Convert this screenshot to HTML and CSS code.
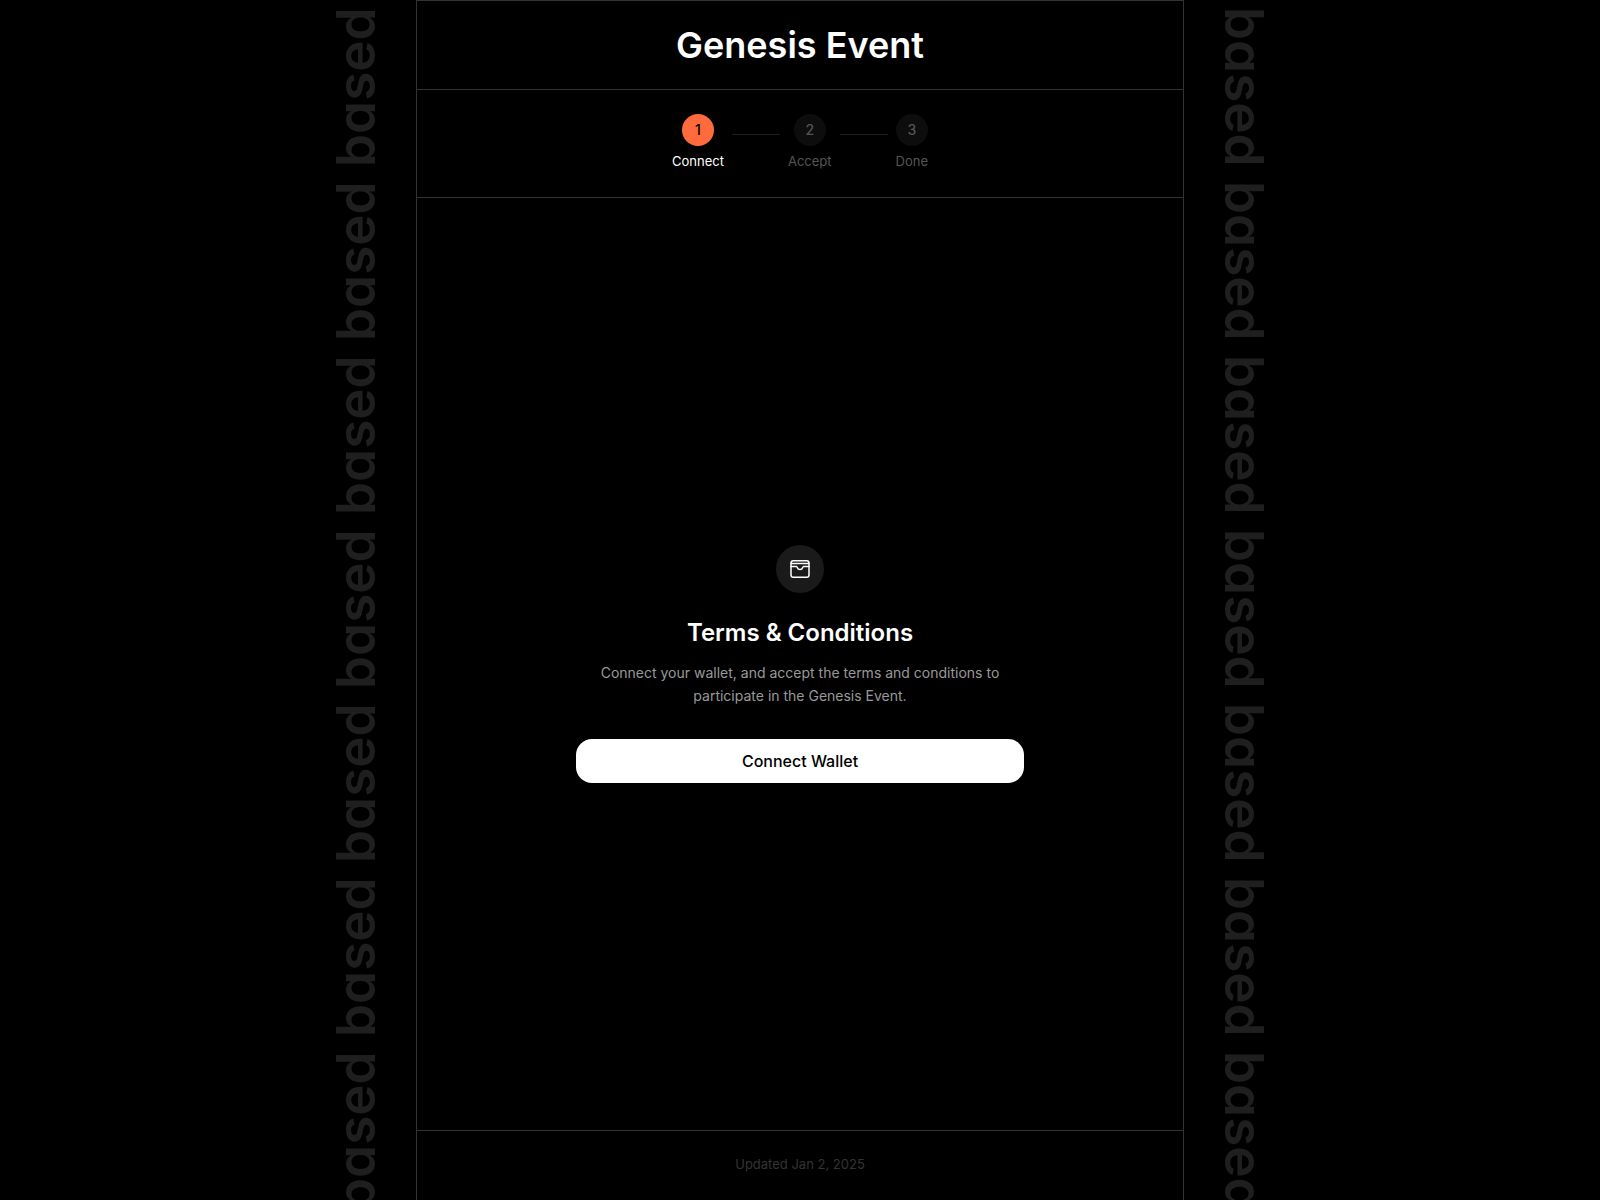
FILE: index.html
```html
<!DOCTYPE html>
<html lang="en">
<head>
<meta charset="utf-8">
<meta name="viewport" content="width=device-width, initial-scale=1">
<title>Genesis Event</title>
<link rel="stylesheet" href="styles.css">
</head>
<body>
<div class="page">
  <div class="rail rail-left" aria-hidden="true">
    <span>based</span><span>based</span><span>based</span><span>based</span><span>based</span><span>based</span><span>based</span>
  </div>
  <div class="frame">
    <header class="header"><h1>Genesis Event</h1></header>
    <ol class="steps">
      <li class="step step-active"><span class="dot">1</span><span class="label">Connect</span></li>
      <li class="connector" aria-hidden="true"></li>
      <li class="step"><span class="dot">2</span><span class="label">Accept</span></li>
      <li class="connector" aria-hidden="true"></li>
      <li class="step"><span class="dot">3</span><span class="label">Done</span></li>
    </ol>
    <main class="main">
      <section class="panel">
        <div class="badge">
          <svg width="24" height="24" viewBox="0 0 24 24" fill="none" stroke="currentColor" stroke-width="1.5" stroke-linecap="round" stroke-linejoin="round" aria-hidden="true">
            <rect x="3" y="3.75" width="18" height="16.5" rx="2.25"/>
            <path d="M3 6.6h18M3 9.5h5.25c.6 0 .9.5 1.1 1.1a2.75 2.75 0 0 0 5.3 0c.2-.6.5-1.1 1.1-1.1H21"/>
          </svg>
        </div>
        <h2>Terms &amp; Conditions</h2>
        <p>Connect your wallet, and accept the terms and conditions to participate in the Genesis Event.</p>
        <button type="button" class="connect">Connect Wallet</button>
      </section>
    </main>
    <footer class="footer">Updated Jan 2, 2025</footer>
  </div>
  <div class="rail" aria-hidden="true">
    <span>based</span><span>based</span><span>based</span><span>based</span><span>based</span><span>based</span><span>based</span>
  </div>
</div>
</body>
</html>
```
FILE: styles.css
```css
* {
  box-sizing: border-box;
}

body {
  margin: 0;
  background: #000;
  color: #fff;
  font-family: Inter, "Liberation Sans", sans-serif;
}

h1, h2, p, ol {
  margin: 0;
  padding: 0;
}

.page {
  display: flex;
  justify-content: center;
  gap: 40px;
  height: 100vh;
  overflow: hidden;
}

/* Repeating wordmark on both sides */
.rail {
  display: flex;
  flex-direction: column;
  gap: 20px;
  flex: none;
  width: 40px;
  padding-top: 10px;
  color: #1f1f1f;
  font-size: 53px;
  font-weight: 600;
  line-height: 40px;
  font-feature-settings: "cv11";
}

.rail span {
  flex: none;
  height: 154px;
  writing-mode: vertical-rl;
  display: flex;
  justify-content: center;
}

.rail-left span {
  transform: rotate(180deg);
}

.frame {
  display: flex;
  flex-direction: column;
  flex: 0 1 768px;
  border: 1px solid #333;
  border-bottom: 0;
}

.header {
  padding: 20px 24px;
  border-bottom: 1px solid #333;
  text-align: center;
}

h1 {
  font-size: 36px;
  font-weight: 600;
  line-height: 48px;
}

.steps {
  display: flex;
  justify-content: center;
  gap: 8px;
  padding: 24px 24px 28px;
  border-bottom: 1px solid #333;
  list-style: none;
}

.step {
  display: flex;
  flex-direction: column;
  align-items: center;
  gap: 7px;
  color: #555;
}

.dot {
  width: 32px;
  height: 32px;
  border-radius: 50%;
  background: #0d0d0d;
  font-size: 14px;
  font-weight: 500;
  line-height: 31px;
  text-align: center;
}

.label {
  font-size: 13px;
  line-height: 16px;
}

.step-active {
  color: #fff;
}

.step-active .dot {
  background: #ff6b3d;
  color: #000;
}

.connector {
  width: 48px;
  height: 1px;
  margin-top: 20px;
  background: #1f1f1f;
}

.main {
  display: grid;
  flex: 1;
  place-items: center;
}

.panel {
  display: flex;
  flex-direction: column;
  align-items: center;
  width: 100%;
  max-width: 448px;
  text-align: center;
}

.badge {
  display: grid;
  place-items: center;
  width: 48px;
  height: 48px;
  margin-bottom: 24px;
  border-radius: 50%;
  background: #1a1a1a;
}

h2 {
  margin-bottom: 12px;
  font-size: 24px;
  font-weight: 600;
  line-height: 32px;
}

.panel p {
  margin-bottom: 32px;
  padding: 0 16px;
  color: #999;
  font-size: 14px;
  line-height: 23px;
}

.connect {
  width: 100%;
  height: 44px;
  border: 0;
  border-radius: 16px;
  background: #fff;
  color: #000;
  font: 500 16px/24px Inter, "Liberation Sans", sans-serif;
  cursor: pointer;
}

.footer {
  padding: 24px 24px 26px;
  border-top: 1px solid #333;
  color: #333;
  font-size: 13px;
  line-height: 19px;
  text-align: center;
}
```
